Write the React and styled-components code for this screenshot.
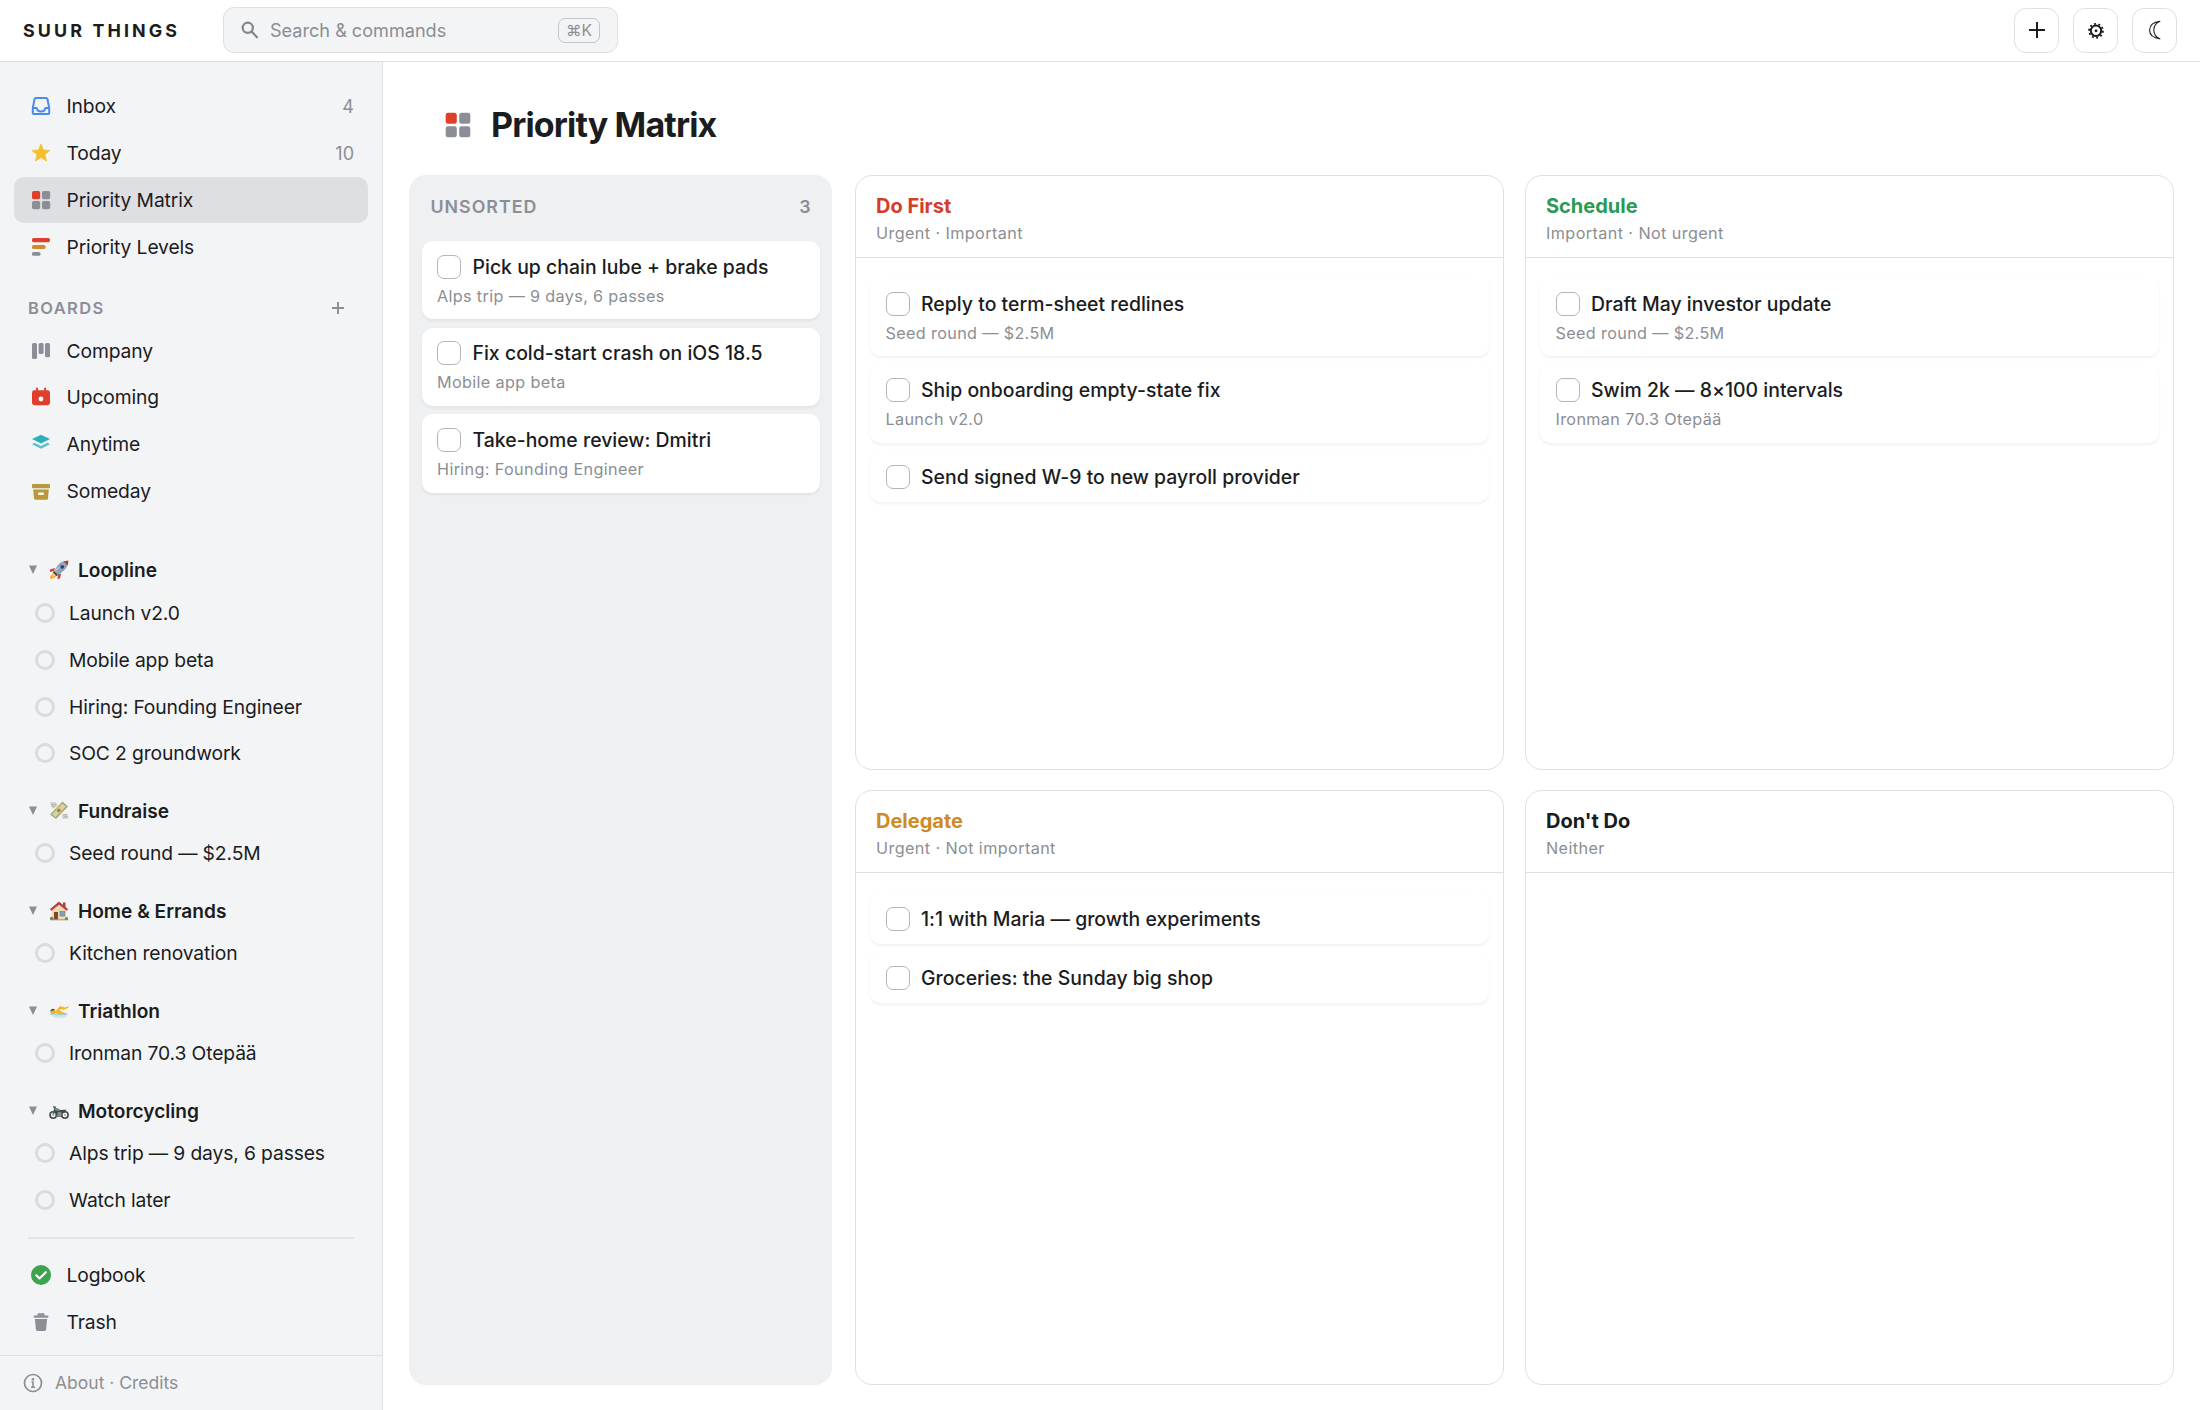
import React from "react";
import styled, { createGlobalStyle } from "styled-components";

const boards = [
  { name: "Company", icon: "columns" },
  { name: "Upcoming", icon: "calendar" },
  { name: "Anytime", icon: "layers" },
  { name: "Someday", icon: "archive" },
];

const areas = [
  {
    name: "Loopline",
    icon: "rocket",
    projects: [
      "Launch v2.0",
      "Mobile app beta",
      "Hiring: Founding Engineer",
      "SOC 2 groundwork",
    ],
  },
  { name: "Fundraise", icon: "money", projects: ["Seed round — $2.5M"] },
  { name: "Home & Errands", icon: "house", projects: ["Kitchen renovation"] },
  { name: "Triathlon", icon: "swimmer", projects: ["Ironman 70.3 Otepää"] },
  {
    name: "Motorcycling",
    icon: "motorcycle",
    projects: ["Alps trip — 9 days, 6 passes", "Watch later"],
  },
];

const unsorted = [
  { title: "Pick up chain lube + brake pads", project: "Alps trip — 9 days, 6 passes" },
  { title: "Fix cold-start crash on iOS 18.5", project: "Mobile app beta" },
  { title: "Take-home review: Dmitri", project: "Hiring: Founding Engineer" },
];

const quadrants = [
  {
    title: "Do First",
    hint: "Urgent · Important",
    color: "#d43d2a",
    tasks: [
      { title: "Reply to term-sheet redlines", project: "Seed round — $2.5M" },
      { title: "Ship onboarding empty-state fix", project: "Launch v2.0" },
      { title: "Send signed W-9 to new payroll provider" },
    ],
  },
  {
    title: "Schedule",
    hint: "Important · Not urgent",
    color: "#2c9a55",
    tasks: [
      { title: "Draft May investor update", project: "Seed round — $2.5M" },
      { title: "Swim 2k — 8×100 intervals", project: "Ironman 70.3 Otepää" },
    ],
  },
  {
    title: "Delegate",
    hint: "Urgent · Not important",
    color: "#cf8a24",
    tasks: [
      { title: "1:1 with Maria — growth experiments" },
      { title: "Groceries: the Sunday big shop" },
    ],
  },
  { title: "Don't Do", hint: "Neither", color: "#1b1c1e", tasks: [] },
];

const icons = {
  inbox: (
    <g fill="none" stroke="#4b8bf0" strokeWidth="2" strokeLinejoin="round">
      <path d="M5 2h10q1.3 0 1.500 1.300l1.700 8.700v4.400q0 1.600-1.600 1.600H3.400q-1.600 0-1.600-1.600V12l1.700-8.700Q3.700 2 5 2z" />
      <path d="M2 12h3.600q.6 3.400 4.400 3.400t4.400-3.400H18" />
    </g>
  ),
  star: (
    <path
      fill="#f5c02c"
      stroke="#f5c02c"
      strokeWidth=".8"
      strokeLinejoin="round"
      d="M10 .9l2.400 6 6.600.5-5.100 4.200 1.700 6.500L10 14.500l-5.600 3.600 1.700-6.500L1 7.400l6.600-.5z"
    />
  ),
  matrix: (
    <g fill="#8b8e96">
      <rect x="1" y="1" width="8.2" height="8.2" rx="1.7" fill="#e0402b" />
      <rect x="11" y="1" width="8.2" height="8.2" rx="1.7" />
      <rect x="1" y="11" width="8.2" height="8.2" rx="1.7" />
      <rect x="11" y="11" width="8.2" height="8.2" rx="1.7" />
    </g>
  ),
  levels: (
    <g>
      <rect x="1" y="1" width="18" height="4.2" rx="1.6" fill="#e0402b" />
      <rect x="1" y="8" width="13.5" height="4" rx="1.6" fill="#d08a2c" />
      <rect x="1" y="15" width="8.5" height="3.8" rx="1.6" fill="#8b8e96" />
    </g>
  ),
  columns: (
    <g fill="#8b8e96">
      <rect x="1" y="2" width="5" height="16" rx="1.6" />
      <rect x="7.6" y="2" width="5" height="11" rx="1.6" />
      <rect x="14" y="2" width="5" height="14.3" rx="1.6" />
    </g>
  ),
  calendar: (
    <g fill="#e0402b">
      <rect x="1" y="3.2" width="18" height="15" rx="2.4" />
      <rect x="5" y=".6" width="1.9" height="4" rx=".8" />
      <rect x="13.2" y=".6" width="1.9" height="4" rx=".8" />
      <circle cx="10" cy="12" r="2.4" fill="#fff" />
    </g>
  ),
  layers: (
    <g fill="#2cb0bd">
      <path d="M10 .8l9 4.2-9 4.4L1 5z" />
      <path d="M1 10.2l2.6-1.4 6.4 3.1 6.4-3.1 2.6 1.4-9 4.6z" opacity=".75" />
    </g>
  ),
  archive: (
    <g fill="#b9983d">
      <rect x="1" y="3" width="18" height="4.2" rx="1" />
      <path d="M2.2 8.6h15.6l-.8 8.6q-.2 1.6-1.7 1.6H4.7Q3.2 18.8 3 17.2z" />
      <rect x="7" y="11.6" width="6" height="2.3" rx="1.1" fill="#fff" />
    </g>
  ),
  logbook: (
    <g>
      <circle cx="10" cy="10" r="10" fill="#3da34d" />
      <path
        d="M5.3 10.3l3.200 3.200 6.400-6.300"
        fill="none"
        stroke="#fff"
        strokeWidth="2.1"
        strokeLinecap="round"
        strokeLinejoin="round"
      />
    </g>
  ),
  trash: (
    <g fill="#8b8e96">
      <rect x="2.5" y="3.4" width="15" height="2.3" rx="1.1" />
      <path d="M7 1.200h6l1 2.600H6z" />
      <path d="M3.900 7h12.200l-1 10.300q-.2 1.700-1.800 1.700H6.700q-1.600 0-1.800-1.700z" />
    </g>
  ),
};

const pictograms = {
  rocket: (
    <g>
      <path d="M6 8L1 9.500.8 12 5 11zM12 13.500L11 18.500 8.500 19 9 14z" fill="#d3412f" />
      <path d="M5 11.500L1 17l.3 2L5 18l4-3.500z" fill="#f6a92b" />
      <path d="M5 13l-2.500 4 4-2z" fill="#ffe36a" />
      <path d="M19.300.8Q13 .5 9 5L5 11l4 4 6-4.500Q19.500 6.500 19.300.8z" fill="#8fa3bd" />
      <path d="M19.300.8q-2.600-.3-4.800.6l4.100 4.200q.8-2.200.7-4.800z" fill="#b63a35" />
      <path d="M16.500 2.500L7 9.500l-1 2z" fill="#dfe8f2" />
      <circle cx="13.2" cy="6.8" r="1.9" fill="#26466e" />
      <path d="M5 11l4 4-1.500 1L4 12.500z" fill="#3b414b" />
    </g>
  ),
  money: (
    <g>
      <path d="M.8 1.500l6-.4 2 3.500-5 3.200zM13 13.500l5-1 1.500 5-6 .5z" fill="#cfd0cc" />
      <path d="M2 3l5 1M2 5l4 1M14 14l4.500-.5M15 16l4-.5" stroke="#aaa9a3" strokeWidth=".7" />
      <path d="M13.500.5l5.500 5-12 12.500L1 13.500z" fill="#a8a57c" />
      <path d="M13.500 2.400l3.400 3.200L6.500 16.200 3 13.300z" fill="#d5d2a5" />
      <path d="M9 5.500l4.800 4.500-2.400 2.300L6.600 7.800z" fill="#e6be4d" />
      <circle cx="9.7" cy="9.5" r="1.8" fill="#8a8b62" />
    </g>
  ),
  house: (
    <g>
      <rect x="14" y="1.5" width="2.5" height="6" fill="#9c4534" />
      <path d="M3 8l7-6 7 6v10.500H3z" fill="#f0d9b1" />
      <path d="M10 .5L.8 8.300l1.500 1.500L10 3.700l7.700 6.100 1.500-1.500z" fill="#b9403a" />
      <rect x="5" y="11" width="4" height="7.5" fill="#7c4a31" />
      <rect x="11" y="10.5" width="4.8" height="4.5" fill="#6fa2cd" stroke="#8e8172" strokeWidth=".7" />
      <path d="M1 18.800v-2l1.500-1.300 2 1.500v1.800zM15.500 18.800l1-2.200 2-.8.700 3z" fill="#5c8e43" />
      <path d="M1 18.800h18" stroke="#8b7964" strokeWidth=".8" />
    </g>
  ),
  swimmer: (
    <g>
      <path d="M.8 12q4 2.500 9 1.500t9.400-1q-1.500 4.500-9 4.500T.8 12z" fill="#cfe5ec" />
      <path d="M5 12l6-7 5 1.500 3.300-1.200.2 1.500-4.500 1.900-3.300-.7-1 1.200 3 1.700q2 1.600 4.500 1l-2 1.600q-4 .8-7.200-.3T5 12z" fill="#f2b92b" />
      <circle cx="4" cy="10.5" r="2.6" fill="#efb12b" />
      <path d="M1.400 10.500a2.600 2.600 0 014.600-1.700z" fill="#35576d" />
      <path d="M1 13.500q3-1 5 0t5 .2 6-.2" fill="none" stroke="#9ecbd9" strokeWidth="1" />
    </g>
  ),
  motorcycle: (
    <g>
      <circle cx="4.2" cy="14" r="3.2" fill="none" stroke="#45484b" strokeWidth="1.6" />
      <circle cx="15.9" cy="14" r="3.2" fill="none" stroke="#45484b" strokeWidth="1.6" />
      <path d="M4.200 14L6 6.500M4 6l3 .2M7 15h7" fill="none" stroke="#55585b" strokeWidth="1.3" />
      <path d="M6 8.500l5 .5 6.500-.2-2 3-6.500 2.500-3-3z" fill="#44474a" />
      <path d="M5.500 6.500l5 1.500.5 2-4-.3z" fill="#5b957d" />
      <circle cx="10.5" cy="13" r="2.2" fill="#898d90" />
      <circle cx="4.2" cy="14" r="1" fill="#a1a5a8" />
      <circle cx="15.9" cy="14" r="1" fill="#a1a5a8" />
    </g>
  ),
};

function Task({ title, project }) {
  return (
    <Card>
      <TaskRow>
        <Checkbox />
        <TaskTitle>{title}</TaskTitle>
      </TaskRow>
      {project && <ProjectName>{project}</ProjectName>}
    </Card>
  );
}

function NavItem({ icon, name, count, active }) {
  return (
    <NavRow $active={active}>
      <Icon viewBox="0 0 20 20">{icons[icon]}</Icon>
      <NavLabel>{name}</NavLabel>
      {count && <Count>{count}</Count>}
    </NavRow>
  );
}

function Header() {
  return (
    <TopBar>
      <Brand>SUUR THINGS</Brand>
      <Search>
        <SearchIcon viewBox="0 0 18 18">
          <circle cx="6.8" cy="6.8" r="5.1" />
          <path d="M10.600 10.600l5.400 5.600" />
        </SearchIcon>
        <Placeholder>Search &amp; commands</Placeholder>
        <Shortcut>⌘K</Shortcut>
      </Search>
      <Actions>
        <ActionButton>
          <svg width="18" height="18" viewBox="0 0 18 18">
            <path d="M9 1v16M1 9h16" stroke="#1b1c1e" strokeWidth="2" />
          </svg>
        </ActionButton>
        <ActionButton>
          <svg width="18" height="18" viewBox="0 0 18 18">
            <g fill="none" stroke="#1b1c1e">
              <circle cx="9" cy="9.8" r="5.2" strokeWidth="2" />
              <circle cx="9" cy="9.8" r="6.9" strokeWidth="1.9" strokeDasharray="1.9 2.435" />
            </g>
            <circle cx="9" cy="9.8" r="1.4" fill="#1b1c1e" />
          </svg>
        </ActionButton>
        <ActionButton>
          <svg width="20" height="22" viewBox="0 0 20 22">
            <path
              d="M15.200 2.200Q4.600 3.400 4.600 11T15.200 19.900Q8.800 17.500 8.800 11T15.200 2.200z"
              fill="none"
              stroke="#1b1c1e"
              strokeWidth="1.1"
            />
          </svg>
        </ActionButton>
      </Actions>
    </TopBar>
  );
}

function Sidebar() {
  return (
    <Side>
      <Nav>
        <NavItem icon="inbox" name="Inbox" count="4" />
        <NavItem icon="star" name="Today" count="10" />
        <NavItem icon="matrix" name="Priority Matrix" active />
        <NavItem icon="levels" name="Priority Levels" />

        <SectionHead>
          BOARDS
          <svg width="14" height="14" viewBox="0 0 14 14">
            <path d="M7 1v12M1 7h12" stroke="#8b8e96" strokeWidth="1.9" />
          </svg>
        </SectionHead>
        {boards.map((board) => (
          <NavItem key={board.name} icon={board.icon} name={board.name} />
        ))}

        <Areas>
          {areas.map((area) => (
            <Area key={area.name}>
              <AreaHead>
                <Arrow viewBox="0 0 8 9">
                  <path d="M0 .5h8L4 9z" />
                </Arrow>
                <Pictogram viewBox="0 0 20 20">{pictograms[area.icon]}</Pictogram>
                {area.name}
              </AreaHead>
              {area.projects.map((project) => (
                <ProjectRow key={project}>
                  <Ring />
                  {project}
                </ProjectRow>
              ))}
            </Area>
          ))}
        </Areas>

        <Divider />
        <NavItem icon="logbook" name="Logbook" />
        <NavItem icon="trash" name="Trash" />
      </Nav>
      <Footer>
        <svg width="20" height="20" viewBox="0 0 20 20">
          <circle cx="10" cy="10" r="8.5" fill="none" stroke="#8b8e96" strokeWidth="1.7" />
          <circle cx="10" cy="6.2" r="1.3" fill="#8b8e96" />
          <path d="M8.500 9H10v5M8 14.200h4" fill="none" stroke="#8b8e96" strokeWidth="1.6" />
        </svg>
        About · Credits
      </Footer>
    </Side>
  );
}

function App() {
  return (
    <Page>
      <GlobalStyle />
      <Header />
      <Body>
        <Sidebar />
        <Main>
          <TitleRow>
            <TitleIcon viewBox="0.5 0.5 19.2 19.2">{icons.matrix}</TitleIcon>
            <h1>Priority Matrix</h1>
          </TitleRow>
          <Board>
            <Column>
              <ColumnHead>
                <span>UNSORTED</span>
                <ColumnCount>3</ColumnCount>
              </ColumnHead>
              <Tasks>
                {unsorted.map((task) => (
                  <Task key={task.title} {...task} />
                ))}
              </Tasks>
            </Column>
            <Matrix>
              {quadrants.map((quadrant) => (
                <Quadrant key={quadrant.title}>
                  <QuadrantHead>
                    <QuadrantTitle $color={quadrant.color}>{quadrant.title}</QuadrantTitle>
                    <Hint>{quadrant.hint}</Hint>
                  </QuadrantHead>
                  <QuadrantTasks>
                    {quadrant.tasks.map((task) => (
                      <Task key={task.title} {...task} />
                    ))}
                  </QuadrantTasks>
                </Quadrant>
              ))}
            </Matrix>
          </Board>
        </Main>
      </Body>
    </Page>
  );
}

const GlobalStyle = createGlobalStyle`
  * {
    box-sizing: border-box;
  }

  body {
    margin: 0;
    background: #fff;
    color: #1b1c1e;
    font-family: Inter, "Liberation Sans", sans-serif;
    font-size: 19.3px;
  }

  svg {
    display: block;
    flex-shrink: 0;
  }
`;

const Page = styled.div`
  display: flex;
  flex-direction: column;
  height: 1410px;
  overflow: hidden;
`;

const TopBar = styled.header`
  display: flex;
  align-items: center;
  height: 62px;
  padding: 0 23px 1px;
  border-bottom: 1px solid #dfe0e2;
`;

const Brand = styled.div`
  width: 200px;
  font-size: 17.9px;
  font-weight: 700;
  letter-spacing: 3.1px;
`;

const Search = styled.div`
  display: flex;
  align-items: center;
  width: 395px;
  height: 46px;
  padding: 0 17px 0 17px;
  border: 1px solid #dee0e2;
  border-radius: 11px;
  background: #f3f4f6;
`;

const SearchIcon = styled.svg`
  width: 18px;
  height: 18px;
  margin-right: 11px;
  fill: none;
  stroke: #83868c;
  stroke-width: 2.2;
  stroke-linecap: round;
`;

const Placeholder = styled.span`
  flex: 1;
  color: #8b8e93;
  font-size: 18.1px;
`;

const Shortcut = styled.kbd`
  width: 42px;
  height: 25px;
  border: 1px solid #c3c5c8;
  border-radius: 7px;
  color: #8b8e93;
  font-family: Inter, "DejaVu Sans", sans-serif;
  font-size: 15.5px;
  line-height: 24px;
  text-align: center;
`;

const Actions = styled.div`
  display: flex;
  gap: 14px;
  margin-left: auto;
`;

const ActionButton = styled.button`
  display: flex;
  align-items: center;
  justify-content: center;
  width: 45px;
  height: 45px;
  padding: 0;
  border: 1px solid #dfe0e2;
  border-radius: 12px;
  background: #fff;
`;

const Body = styled.div`
  display: flex;
  flex: 1;
  min-height: 0;
`;

const Side = styled.aside`
  display: flex;
  flex-direction: column;
  width: 383px;
  border-right: 1px solid #dee0e2;
  background: #f3f4f6;
`;

const Nav = styled.nav`
  flex: 1;
  min-height: 0;
  padding: 21.6px 14px 0;
`;

const NavRow = styled.div`
  display: flex;
  align-items: center;
  height: 45.3px;
  margin-bottom: 1.6px;
  padding: 0 14px 0 17px;
  border-radius: 10px;
  background: ${({ $active }) => ($active ? "#dedfe3" : "transparent")};
`;

const Icon = styled.svg`
  width: 20px;
  height: 20px;
`;

const NavLabel = styled.span`
  flex: 1;
  margin-left: 15.5px;
  letter-spacing: -0.13px;
`;

const Count = styled.span`
  color: #8b8e93;
  font-size: 18px;
`;

const SectionHead = styled.div`
  display: flex;
  align-items: center;
  justify-content: space-between;
  height: 44px;
  margin: 16.3px 23px -2px 14px;
  color: #8b8e96;
  font-size: 16.5px;
  font-weight: 600;
  letter-spacing: 1.4px;
`;

const Areas = styled.div`
  padding-top: 34.3px;
`;

const Area = styled.div`
  margin-bottom: 14.3px;
`;

const AreaHead = styled.div`
  display: flex;
  align-items: center;
  height: 40.4px;
  padding-left: 15px;
  font-size: 19.1px;
  font-weight: 600;
`;

const Arrow = styled.svg`
  width: 8px;
  height: 9px;
  fill: #8b8e93;
`;

const Pictogram = styled.svg`
  width: 20px;
  height: 20px;
  margin: 0 9px 0 12px;
`;

const ProjectRow = styled.div`
  display: flex;
  align-items: center;
  height: 45.3px;
  margin-bottom: 1.6px;
  padding-left: 21px;
  letter-spacing: -0.13px;
`;

const Ring = styled.span`
  width: 20px;
  height: 20px;
  margin-right: 14px;
  border: 3px solid #d9dbdd;
  border-radius: 50%;
`;

const Divider = styled.div`
  height: 1.5px;
  margin: 2px 14px 14px;
  background: #e2e4e6;
`;

const Footer = styled.footer`
  display: flex;
  align-items: center;
  gap: 12px;
  height: 55px;
  padding: 0 0 1px 23px;
  border-top: 1px solid #dee0e2;
  color: #8b8e93;
  font-size: 17.5px;
`;

const Main = styled.main`
  display: flex;
  flex: 1;
  flex-direction: column;
  padding: 0 26px 25px 26px;
`;

const TitleRow = styled.div`
  display: flex;
  align-items: center;
  height: 113px;
  padding: 12px 0 0 35.5px;

  h1 {
    margin: 0 0 0 20.5px;
    font-size: 34px;
    font-weight: 700;
    letter-spacing: -0.85px;
  }
`;

const TitleIcon = styled.svg`
  width: 26px;
  height: 26px;
`;

const Board = styled.div`
  display: flex;
  flex: 1;
  gap: 23px;
`;

const Column = styled.section`
  width: 423px;
  padding: 0 12.5px;
  border-radius: 17px;
  background: #eff0f2;
`;

const ColumnHead = styled.div`
  display: flex;
  justify-content: space-between;
  height: 66px;
  padding: 20px 9px 0 9px;
  color: #8b8e96;
  font-size: 17.8px;
  font-weight: 600;
  line-height: 23px;
  letter-spacing: 1px;
`;

const ColumnCount = styled.span`
  letter-spacing: 0;
`;

const Tasks = styled.div`
  display: flex;
  flex-direction: column;
  gap: 8.4px;
`;

const Card = styled.article`
  padding: 13.5px 15px 13.5px 15.5px;
  border-radius: 11px;
  background: #fff;
  box-shadow: 0 1.5px 3px rgba(0, 0, 0, 0.06);
`;

const TaskRow = styled.div`
  display: flex;
  align-items: center;
  height: 24px;
`;

const Checkbox = styled.span`
  width: 24px;
  height: 24px;
  margin-right: 11.5px;
  border: 1px solid #b3b5b8;
  border-radius: 7px;
`;

const TaskTitle = styled.span`
  font-size: 19.4px;
  font-weight: 500;
  letter-spacing: 0.03px;
`;

const ProjectName = styled.div`
  margin-top: 7.3px;
  margin-bottom: -1px;
  color: #8b8e93;
  font-size: 16.2px;
  line-height: 21px;
  letter-spacing: 0.35px;
`;

const Matrix = styled.div`
  display: grid;
  flex: 1;
  grid-template-columns: 1fr 1fr;
  grid-template-rows: 1fr 1fr;
  gap: 20px 21px;
`;

const Quadrant = styled.section`
  border: 1px solid #dfe0e2;
  border-radius: 17px;
`;

const QuadrantHead = styled.div`
  height: 82px;
  padding: 17px 20px 0;
  border-bottom: 1px solid #dfe0e2;
`;

const QuadrantTitle = styled.h2`
  margin: 0;
  color: ${({ $color }) => $color};
  font-size: 20px;
  font-weight: 700;
  line-height: 27px;
`;

const Hint = styled.div`
  color: #8b8e93;
  font-size: 16.2px;
  line-height: 27px;
  letter-spacing: 0.4px;
`;

const QuadrantTasks = styled(Tasks)`
  padding: 20px 14px;
`;

export default App;
